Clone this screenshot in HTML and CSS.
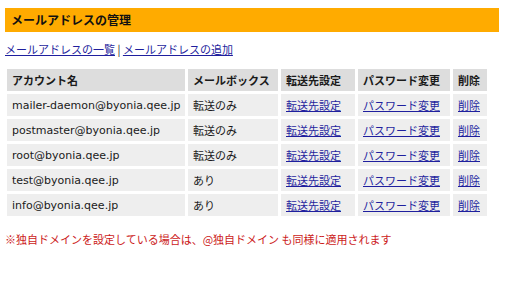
FILE: index.html
```html
<!DOCTYPE html>
<html lang="ja">
<head>
<meta charset="utf-8">
<title>メールアドレスの管理</title>
<link rel="stylesheet" href="styles.css">
</head>
<body>
<div class="title">メールアドレスの管理</div>
<div class="nav"><a href="#">メールアドレスの一覧</a> | <a href="#">メールアドレスの追加</a></div>
<table class="list">
  <thead>
    <tr>
      <th class="c1">アカウント名</th>
      <th class="c2">メールボックス</th>
      <th class="c3">転送先設定</th>
      <th class="c4">パスワード変更</th>
      <th class="c5">削除</th>
    </tr>
  </thead>
  <tbody>
    <tr><td>mailer-daemon@byonia.qee.jp</td><td>転送のみ</td><td><a href="#">転送先設定</a></td><td><a href="#">パスワード変更</a></td><td><a href="#">削除</a></td></tr>
    <tr><td>postmaster@byonia.qee.jp</td><td>転送のみ</td><td><a href="#">転送先設定</a></td><td><a href="#">パスワード変更</a></td><td><a href="#">削除</a></td></tr>
    <tr><td>root@byonia.qee.jp</td><td>転送のみ</td><td><a href="#">転送先設定</a></td><td><a href="#">パスワード変更</a></td><td><a href="#">削除</a></td></tr>
    <tr><td>test@byonia.qee.jp</td><td>あり</td><td><a href="#">転送先設定</a></td><td><a href="#">パスワード変更</a></td><td><a href="#">削除</a></td></tr>
    <tr><td>info@byonia.qee.jp</td><td>あり</td><td><a href="#">転送先設定</a></td><td><a href="#">パスワード変更</a></td><td><a href="#">削除</a></td></tr>
  </tbody>
</table>
<p class="note">※独自ドメインを設定している場合は、@独自ドメイン も同様に適用されます</p>
</body>
</html>
```
FILE: styles.css
```css
html, body {
  margin: 0;
  background: #ffffff;
}
body {
  padding: 8px 0 0 5px;
  font-family: "DejaVu Sans", "Noto Sans CJK JP", sans-serif;
  font-size: 11px;
  color: #1a1a1a;
}
a {
  color: #1f1f9e;
  text-decoration: underline;
}
.title {
  width: 488px;
  height: 24px;
  line-height: 24px;
  padding-left: 6px;
  background: #ffab00;
  font-family: "Noto Sans CJK JP", sans-serif;
  font-weight: bold;
  font-size: 12px;
  color: #111111;
}
.nav {
  margin-top: 10px;
  line-height: 14px;
  font-family: "Noto Sans CJK JP", sans-serif;
}
.list {
  margin-top: 10px;
  border-spacing: 3px;
  margin-left: -1px;
}
.list th, .list td {
  box-sizing: border-box;
  height: 22px;
  padding: 0 4px 0 5px;
  text-align: left;
  white-space: nowrap;
}
.list th {
  background: #dddddd;
  font-family: "Noto Sans CJK JP", sans-serif;
  font-weight: bold;
}
.list td {
  background: #eeeeee;
}
.c1 { width: 178px; }
.c2 { width: 90px; }
.c3 { width: 74px; }
.c4 { width: 92px; }
.c5 { width: 34px; }
.note {
  margin: 13px 0 0 0;
  line-height: 14px;
  color: #cc1a1a;
  font-family: "Noto Sans CJK JP", sans-serif;
}
```
